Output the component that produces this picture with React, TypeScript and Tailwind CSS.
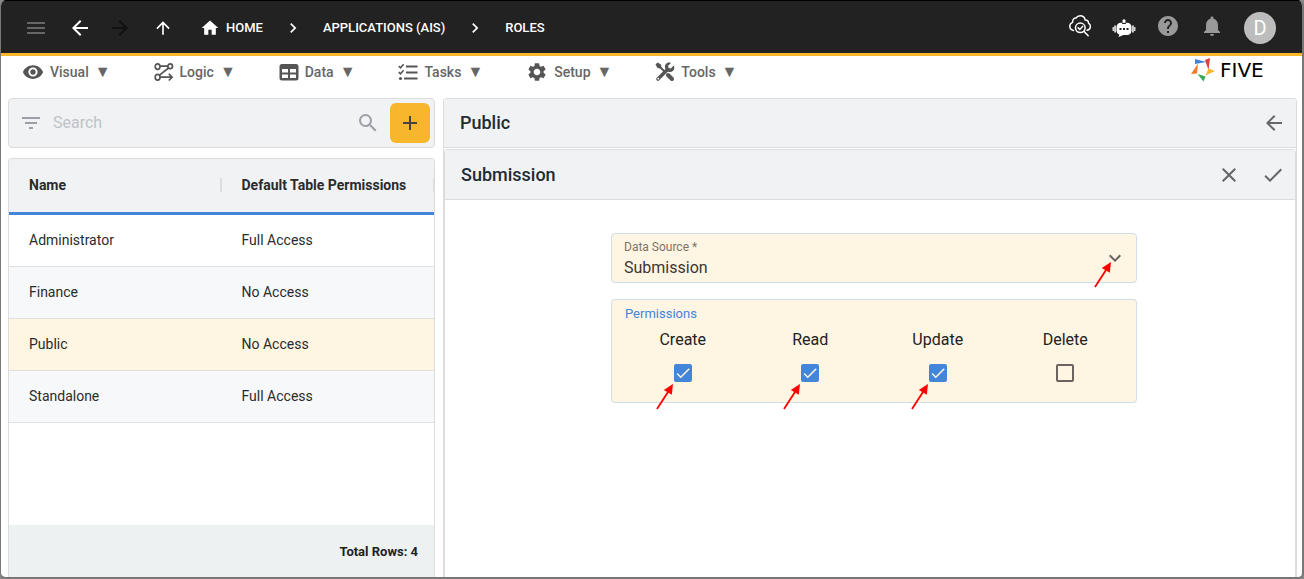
import { useState } from "react";
import type { ReactNode } from "react";
import {
  MdAdd,
  MdArrowBack,
  MdArrowForward,
  MdArrowUpward,
  MdCheck,
  MdChevronRight,
  MdClose,
  MdExpandMore,
  MdFilterList,
  MdHelp,
  MdHome,
  MdMenu,
  MdNotifications,
  MdSearch,
  MdSettings,
  MdVisibility,
} from "react-icons/md";

type Role = { name: string; access: string };

const roles: Role[] = [
  { name: "Administrator", access: "Full Access" },
  { name: "Finance", access: "No Access" },
  { name: "Public", access: "No Access" },
  { name: "Standalone", access: "Full Access" },
];

function LogicIcon() {
  return (
    <svg width="20" height="20" viewBox="0 0 20 20" fill="none" stroke="currentColor" strokeWidth="1.7">
      <ellipse cx="3.6" cy="4.6" rx="2.4" ry="2.8" />
      <ellipse cx="16.2" cy="4.2" rx="2.3" ry="2.4" />
      <ellipse cx="3.6" cy="15.2" rx="2.4" ry="2.9" />
      <path d="M6 4.2h8M14.6 6 5.5 13.2M6 15.2h12M14.8 11.9l3.3 3.3-3.3 3.3" />
    </svg>
  );
}

function DataIcon() {
  return (
    <svg width="20" height="20" viewBox="0 0 20 20" fill="currentColor" fillRule="evenodd">
      <path d="M3 2h14a2.5 2.5 0 0 1 2.5 2.5v11.5a2.5 2.5 0 0 1-2.5 2.5H3A2.5 2.5 0 0 1 .5 16V4.5A2.5 2.5 0 0 1 3 2zM3 7v3.500h6V7zM11 7v3.500h6V7zM3 12.500V16h6v-3.500zM11 12.500V16h6v-3.500z" />
    </svg>
  );
}

function TasksIcon() {
  return (
    <svg width="20" height="20" viewBox="0 0 20 20" fill="none" stroke="currentColor">
      <path strokeWidth="2" d="M8 4.500h11.500M8 10.500h11.500M6 16.500h13.500" />
      <path strokeWidth="1.600" d="m.8 4.200 1.700 1.600L5.600 2.300M.8 10.200l1.700 1.600 3.100-3.500" />
      <circle cx="2.500" cy="16.500" r="1.600" fill="currentColor" stroke="none" />
    </svg>
  );
}

function ToolsIcon() {
  return (
    <svg width="20" height="20" viewBox="0 0 20 20" fill="none" stroke="currentColor">
      <path strokeWidth="2" d="m3 3 7 7" />
      <path strokeWidth="4" strokeLinecap="round" d="m13 13 4 4" />
      <path strokeWidth="3.600" strokeLinecap="round" d="m3 17 9.500-9.500" />
      <path fill="currentColor" stroke="none" d="M.5 2.500 2.500.5l3.500 2 .4 2.500L5 6.400 2.500 6zM18.700 3.500l-2.900 2.900-2.200-.4-.5-2.300L16 .9c-2-.8-4.200-.2-5.200 1.200-1.100 1.500-1.100 3.400-.2 5.200l2.200 2.200c1.800.9 3.900.6 5.300-.7 1.400-1.400 1.600-3.500.6-5.300z" />
      <circle cx="3.300" cy="16.700" r=".9" fill="#fff" stroke="none" />
    </svg>
  );
}

function CloudSearchIcon() {
  return (
    <svg width="24" height="24" viewBox="0 0 24 24" fill="none" stroke="currentColor" strokeWidth="1.500" strokeLinecap="round" strokeLinejoin="round">
      <path d="M5.500 16.500C3.200 16 1.800 14.400 1.800 12.300c0-1.900 1-3.300 2.800-3.900C4.400 5.500 5.800 4 8 4c1-1.500 2.400-2.200 4.200-2.200 2.600 0 4.500 1.600 5 4.200 2 0 3.300 1.300 3.300 3.200 1.300.8 1.900 1.900 1.900 3.300 0 2-1.300 3.300-3.300 3.800" />
      <circle cx="12.300" cy="13.800" r="4.800" />
      <path d="m10.200 13.900 1.600 1.600 2.800-3.100M15.900 17.400l4.300 4.300" />
    </svg>
  );
}

function BotIcon() {
  return (
    <svg width="24" height="24" viewBox="0 0 24 24" fill="currentColor" fillRule="evenodd">
      <circle cx="12" cy="4.800" r="1.600" />
      <path d="M11 5h2l1 3h-4zM9 6.800h6c2.800 0 4.500 2 4.500 4.500v3.200c0 2.500-1.700 4.500-4.500 4.500h-3.500L6.500 21l.8-2.400C5.500 17.900 4.500 16.400 4.500 14.500v-3.200c0-2.500 1.700-4.500 4.500-4.500zM7.500 12v2h2v-2zM11 12v2h2v-2zM14.500 12v2h2v-2z" />
      <path d="M2.300 9.500h1.500v7H2.300zM.6 11h1.200v4H.6zM20.200 9.500h1.500v7h-1.500zM22.200 11h1.200v4h-1.200z" />
    </svg>
  );
}

function FiveLogo() {
  return (
    <a href="#five" aria-label="Five" className="flex items-center gap-1 text-black">
      <svg width="26" height="26" viewBox="0 0 26 26">
        <path fill="#3f84d8" d="M5 2 16.500 5 5 7z" />
        <path fill="#e23b3b" d="M20 1 18.500 13 15 3z" />
        <path fill="#f8b62d" d="m18.500 11.500 6.500 2.500-9.500 4.500z" />
        <path fill="#35a853" d="m7.500 17 8 2.500-2 5z" />
        <path fill="#f5792a" d="M8 6.500 7 16.500 1 17z" />
      </svg>
      <span className="w-[60px] font-['DejaVu_Sans'] text-xl leading-none">FIVE</span>
    </a>
  );
}

// Red callout arrow, pointing up and to the right
function Pointer({ className }: { className: string }) {
  return (
    <svg width="18" height="26" viewBox="0 0 18 26" aria-hidden="true" className={`pointer-events-none absolute ${className}`}>
      <path d="M1 25 12 8" stroke="#f00" strokeWidth="1.800" />
      <path d="M17 0 15.800 10.800 7.800 6z" fill="#f00" />
    </svg>
  );
}

const menus: { label: string; icon: ReactNode }[] = [
  { label: "Visual", icon: <MdVisibility size={22} /> },
  { label: "Logic", icon: <LogicIcon /> },
  { label: "Data", icon: <DataIcon /> },
  { label: "Tasks", icon: <TasksIcon /> },
  { label: "Setup", icon: <MdSettings size={22} /> },
  { label: "Tools", icon: <ToolsIcon /> },
];

function TopBar() {
  return (
    <header className="flex h-14 shrink-0 items-center border-t border-b-3 border-t-black border-b-[#f8b62d] bg-[#222] pt-0.5 pr-[26px] pl-[23px] text-white">
      <button type="button" aria-label="Menu" className="text-[#666]">
        <MdMenu size={24} />
      </button>
      <button type="button" aria-label="Back" className="ml-5">
        <MdArrowBack size={24} />
      </button>
      <button type="button" aria-label="Forward" disabled className="ml-4 text-[#111]">
        <MdArrowForward size={24} />
      </button>
      <button type="button" aria-label="Up" className="ml-[21px]">
        <MdArrowUpward size={20} />
      </button>
      <nav className="ml-[27px] flex items-center text-[13px] font-medium">
        <a href="#home" className="flex items-center gap-1.5">
          <MdHome size={20} />
          HOME
        </a>
        <MdChevronRight size={20} className="mx-5" />
        <a href="#applications">APPLICATIONS (AIS)</a>
        <MdChevronRight size={20} className="mx-5" />
        <a href="#roles">ROLES</a>
      </nav>
      <div className="ml-auto flex items-center gap-5">
        <button type="button" aria-label="Inspect" className="pb-1">
          <CloudSearchIcon />
        </button>
        <button type="button" aria-label="Assistant">
          <BotIcon />
        </button>
        <button type="button" aria-label="Help" className="pb-1 text-[#999]">
          <MdHelp size={24} />
        </button>
        <button type="button" aria-label="Notifications" className="pb-1 text-[#999]">
          <MdNotifications size={24} />
        </button>
        <button type="button" className="size-8 rounded-full bg-[#bdbdbd] text-xl">
          D
        </button>
      </div>
    </header>
  );
}

function MenuBar() {
  return (
    <div className="flex h-[42px] shrink-0 items-start justify-between pt-px pr-[22px] pl-[21px]">
      <nav className="flex gap-[43px] pt-1">
        {menus.map((m) => (
          <button key={m.label} type="button" className="flex h-[22px] items-center text-sm font-medium text-[#666]">
            <span className="mr-1.5 text-[#555]">{m.icon}</span>
            {m.label}
            <span className="ml-1.5 text-base leading-none">▼</span>
          </button>
        ))}
      </nav>
      <FiveLogo />
    </div>
  );
}

function RoleList() {
  const [selected, setSelected] = useState("Public");

  return (
    <section className="flex min-w-0 flex-col gap-2.5">
      <div className="flex h-[50px] shrink-0 items-center rounded border border-[#dcdcdc] bg-[#f1f2f4] pr-1 pl-2.5 text-[#9aa0a6]">
        <MdFilterList size={24} />
        <input
          type="search"
          aria-label="Search"
          placeholder="Search"
          className="ml-2.5 min-w-0 flex-1 bg-transparent text-base text-[#333] outline-none placeholder:text-[#c0c3c6]"
        />
        <MdSearch size={24} className="mr-2.5" />
        <button type="button" aria-label="Add" className="flex size-10 items-center justify-center rounded-md bg-[#f8b62d] text-[#444]">
          <MdAdd size={24} />
        </button>
      </div>

      <div className="flex flex-1 flex-col overflow-hidden rounded-t border border-b-0 border-[#dcdcdc]">
        <table className="w-full table-fixed border-separate border-spacing-0 text-left text-sm text-[#2b2b2b]">
          <thead>
            <tr className="h-14 bg-[#f1f2f4]">
              <th className="border-b-3 border-[#4285d9] pb-0.5 pl-5 font-bold">
                <div className="flex items-center justify-between">
                  Name
                  <span className="h-3.5 w-0.5 bg-[#dcdcdc]" />
                </div>
              </th>
              <th className="border-b-3 border-[#4285d9] pb-0.5 pl-5 font-bold whitespace-nowrap">
                <div className="flex items-center justify-between">
                  Default Table Permissions
                  <span className="h-3.5 w-px bg-[#dcdcdc]" />
                </div>
              </th>
            </tr>
          </thead>
          <tbody>
            {roles.map((r) => (
              <tr
                key={r.name}
                onClick={() => setSelected(r.name)}
                className={`h-[52px] ${r.name === selected ? "bg-[#fff5e3]" : "bg-white even:bg-[#f7f8fa]"}`}
              >
                <td className="border-b border-[#e0e0e0] pb-0.5 pl-5">{r.name}</td>
                <td className="border-b border-[#e0e0e0] pb-0.5 pl-5">{r.access}</td>
              </tr>
            ))}
          </tbody>
        </table>
        <div className="mt-auto flex h-[52px] items-center justify-end bg-[#eef1f2] pt-0.5 pr-4 text-[13px] font-bold text-[#222]">
          Total Rows: {roles.length}
        </div>
      </div>
    </section>
  );
}

function PermissionBox({ label, checked, marked }: { label: string; checked?: boolean; marked?: boolean }) {
  const [on, setOn] = useState(!!checked);

  return (
    <label className="flex flex-col items-center gap-3 text-base text-[#222]">
      {label}
      <span className="relative size-[18px]">
        <input
          type="checkbox"
          checked={on}
          onChange={(e) => setOn(e.target.checked)}
          className="block size-[18px] appearance-none rounded-xs border-2 border-[#6b645c] checked:border-[#4285d9] checked:bg-[#4285d9]"
        />
        {on && <MdCheck size={18} className="pointer-events-none absolute inset-0 text-[#fff5e3]" />}
        {marked && <Pointer className="top-5 -left-[18px]" />}
      </span>
    </label>
  );
}

function SubmissionForm() {
  return (
    <section className="flex min-w-0 flex-col rounded-t border border-b-0 border-[#dcdcdc]">
      <div className="flex h-[49px] shrink-0 items-center justify-between rounded-t border-b border-[#dcdcdc] bg-[#f1f2f4] pr-2.5 pl-4">
        <h1 className="text-lg font-medium text-[#222b33]">Public</h1>
        <button type="button" aria-label="Back to list" className="text-[#666]">
          <MdArrowBack size={24} />
        </button>
      </div>
      <div className="mt-px flex flex-1 flex-col rounded-t border border-b-0 border-[#dcdcdc]">
        <div className="flex h-[50px] shrink-0 items-center border-b border-[#dcdcdc] bg-[#f1f2f4] pr-2.5 pl-4 text-[#666]">
          <h2 className="mr-auto text-lg font-medium text-[#222b33]">Submission</h2>
          <button type="button" aria-label="Cancel">
            <MdClose size={24} />
          </button>
          <button type="button" aria-label="Save" className="ml-5">
            <MdCheck size={24} />
          </button>
        </div>

        <form className="ml-2 flex flex-col items-center gap-4 pt-[33px]">
          <div className="relative h-[50px] w-full max-w-[526px] rounded border border-[#cfdded] bg-[#fff5e3]">
            <label htmlFor="data-source" className="absolute top-1 left-3 text-xs leading-[18px] text-[#7a746a]">
              Data Source *
            </label>
            <select
              id="data-source"
              defaultValue="Submission"
              className="size-full appearance-none bg-transparent pt-5 pl-3 text-base text-[#3a3733] outline-none"
            >
              <option>Submission</option>
            </select>
            <MdExpandMore size={24} className="pointer-events-none absolute top-3 right-[9px] text-[#666]" />
            <Pointer className="top-7 right-6" />
          </div>

          <fieldset className="h-[104px] w-full max-w-[526px] rounded border border-[#cfdded] bg-[#fff5e3] px-[7px]">
            <legend className="float-left w-full pt-1 pl-1.5 text-[13px] leading-5 text-[#4285d9]">Permissions</legend>
            <div className="clear-both grid grid-cols-4 pt-1">
              <PermissionBox label="Create" checked marked />
              <PermissionBox label="Read" checked marked />
              <PermissionBox label="Update" checked marked />
              <PermissionBox label="Delete" />
            </div>
          </fieldset>
        </form>
      </div>
    </section>
  );
}

export default function App() {
  return (
    <div className="h-screen bg-[#888]">
      <div className="flex h-full flex-col overflow-hidden rounded-md border-r-2 border-b-2 border-l border-[#777] bg-white font-[Roboto,sans-serif]">
        <TopBar />
        <MenuBar />
        <main className="grid min-h-0 flex-1 grid-cols-[1fr_2fr] gap-2 pr-[5px] pl-[7px]">
          <RoleList />
          <SubmissionForm />
        </main>
      </div>
    </div>
  );
}
